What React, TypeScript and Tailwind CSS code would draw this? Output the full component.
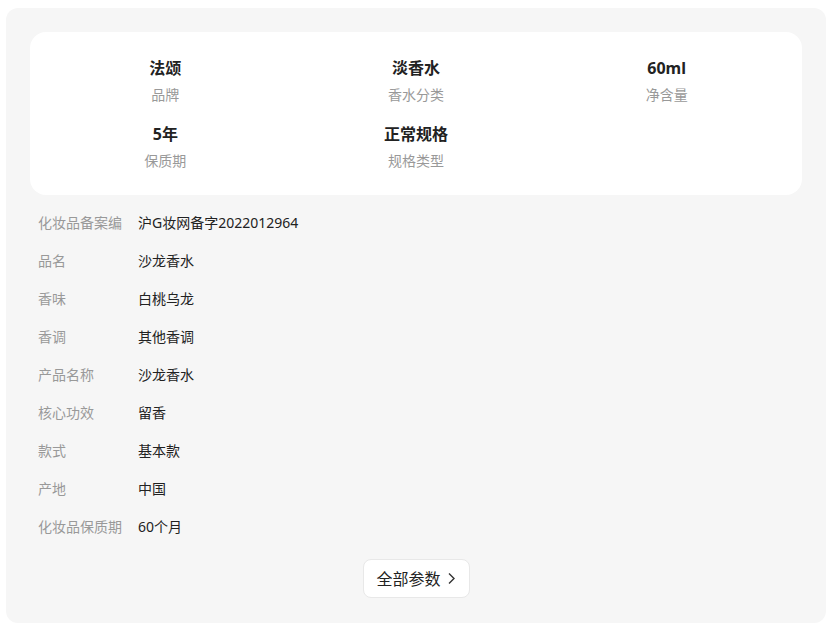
const specs = [
  { value: "法颂", label: "品牌" },
  { value: "淡香水", label: "香水分类" },
  { value: "60ml", label: "净含量" },
  { value: "5年", label: "保质期" },
  { value: "正常规格", label: "规格类型" },
];

const params = [
  ["化妆品备案编", "沪G妆网备字2022012964"],
  ["品名", "沙龙香水"],
  ["香味", "白桃乌龙"],
  ["香调", "其他香调"],
  ["产品名称", "沙龙香水"],
  ["核心功效", "留香"],
  ["款式", "基本款"],
  ["产地", "中国"],
  ["化妆品保质期", "60个月"],
];

export default function App() {
  return (
    <div
      className="min-h-screen bg-white pl-[6px] pt-[8px]"
      style={{ fontFamily: '"Noto Sans", "Noto Sans CJK SC", sans-serif' }}
    >
      <div className="w-[820px] rounded-xl bg-[#f6f6f6] px-6 pt-6 pb-[25px]">
        <div className="grid grid-cols-3 gap-y-[17px] rounded-2xl bg-white px-[10px] pt-6 pb-6">
          {specs.map((s) => (
            <div key={s.label} className="flex flex-col items-center gap-[5px]">
              <div className="text-base leading-6 font-bold text-[#222]">{s.value}</div>
              <div className="text-sm leading-5 text-[#999]">{s.label}</div>
            </div>
          ))}
        </div>

        <div className="mt-[18px] flex flex-col gap-[18px] pl-2">
          {params.map(([k, v]) => (
            <div key={k} className="flex text-sm leading-5">
              <div className="w-[100px] shrink-0 text-[#999]">{k}</div>
              <div className="text-[#222]">{v}</div>
            </div>
          ))}
        </div>

        <div className="mt-[22px] flex justify-center">
          <button className="flex h-[39px] w-[107px] items-center justify-center gap-[6px] rounded-lg border border-[#e8e8e8] bg-white text-base text-[#222]">
            全部参数
            <svg width="9" height="13" viewBox="0 0 9 13" fill="none">
              <path d="M2 1.5l5 5-5 5" stroke="#333" strokeWidth="1.4" />
            </svg>
          </button>
        </div>
      </div>
    </div>
  );
}
